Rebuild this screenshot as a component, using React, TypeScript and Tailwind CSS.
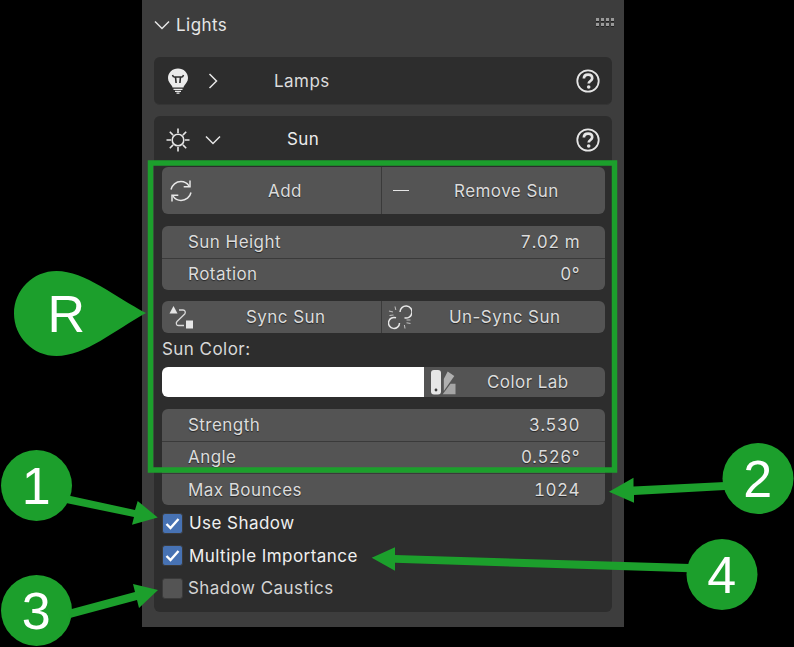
const labelShadow = "[text-shadow:0_1px_1px_rgba(0,0,0,0.55)]";

function Help() {
  return (
    <svg width="24" height="24" viewBox="0 0 24 24" fill="none" className="shrink-0">
      <circle cx="12" cy="12" r="10.7" stroke="#e6e6e6" strokeWidth="1.8" />
      <path d="M7.900 9.600c0-2.400 1.800-3.900 4.200-3.900 2.400 0 4.100 1.400 4.100 3.500 0 2.800-3.500 2.700-3.500 5.400" stroke="#e6e6e6" strokeWidth="2.700" fill="none" />
      <circle cx="12.700" cy="18" r="1.800" fill="#e6e6e6" />
    </svg>
  );
}

function Bulb() {
  return (
    <svg width="22" height="26" viewBox="0 0 22 26" fill="none">
      <path d="M11 0.500C5.300 0.500 1 4.700 1 10c0 3.600 2.200 5.600 3.600 7.400.6.800.8 1.400.9 2.100h11c.1-.7.3-1.300.9-2.100C18.800 15.600 21 13.600 21 10 21 4.700 16.700.500 11 .500z" fill="#ebebeb" />
      <path d="M6.500 9h9M8.500 9l.6 6M13.500 9l-.6 6M6.500 9l-1-2M15.500 9l1-2" stroke="#2d2d2d" strokeWidth="1.600" />
      <path d="M6.500 21.300h9M8 23.300h6M9.500 25.200h3" stroke="#ebebeb" strokeWidth="1.300" />
    </svg>
  );
}

function Sun() {
  return (
    <svg width="24" height="24" viewBox="0 0 24 24" fill="none" stroke="#e6e6e6" strokeWidth="1.600">
      <circle cx="12" cy="12" r="5.800" />
      <path d="M12 0.500v4.500M12 19v4.500M0.500 12h4.500M19 12h4.500M3.800 3.800l3.300 3.300M16.900 16.900l3.300 3.300M20.200 3.800l-3.300 3.300M7.100 16.900l-3.300 3.300" />
    </svg>
  );
}

function Chevron({ open }: { open: boolean }) {
  return (
    <svg width="16" height="16" viewBox="0 0 16 16" fill="none" stroke="#e6e6e6" strokeWidth="1.500">
      {open ? <path d="M1 4.500l7 7 7-7" /> : <path d="M4.500 1l7 7-7 7" />}
    </svg>
  );
}

function Refresh() {
  return (
    <svg width="24" height="24" viewBox="0 0 24 24" fill="none" stroke="#e6e6e6" strokeWidth="1.500">
      <path d="M2 10.500C3 6 7 2.500 12 2.500c3.500 0 6.300 1.800 8 4.300" />
      <path d="M22 13.500c-1 4.500-5 8-10 8-3.500 0-6.300-1.800-8-4.300" />
      <path d="M21 1.500v6.300h-6.300M3 22.500v-6.300h6.300" />
    </svg>
  );
}

function SyncIcon() {
  return (
    <svg width="24" height="26" viewBox="0 0 24 26" fill="none">
      <path d="M0.500 9.500L4.500 2l4 7.500z" fill="#e6e6e6" />
      <path d="M10 6h4c2 0 3 2.300 1.700 4L8 17.500c-1.300 1.500-.7 4 1.300 4H15" stroke="#d9d9d9" strokeWidth="1.300" />
      <rect x="17" y="16.500" width="7" height="8" fill="#e6e6e6" />
    </svg>
  );
}

function UnlinkIcon() {
  return (
    <svg width="24" height="26" viewBox="0 0 24 26" fill="none" stroke="#e6e6e6" strokeWidth="1.500">
      <path d="M12 8a6 6 0 1 1 4.500 5.800" />
      <path d="M11.500 19a5.500 5.500 0 1 1-3.500-5.200" />
      <path d="M7 2.500l.8 3.500M1 7l4 1M1.500 11.500l4-.5M17 24.500l-.6-3.500M22.500 19.500l-4-.8M22.500 16h-4" strokeWidth="1.100" stroke="#bdbdbd" />
    </svg>
  );
}

function SwatchIcon() {
  return (
    <svg width="26" height="26" viewBox="0 0 26 26" fill="none">
      <path d="M16.700 2.500l6.600 4.500-10.500 15V10z" fill="#b0b0b0" />
      <path d="M11.700 25.300L19.500 14.800H24.500v10.500z" fill="#a5a5a5" />
      <rect x="0" y="1" width="10" height="24.500" rx="3" fill="#e6e6e6" />
      <circle cx="5" cy="21" r="1.400" fill="#3d3d3d" />
    </svg>
  );
}

function Grip() {
  return (
    <div className="-mr-[2px] mb-[6px] grid grid-cols-4 gap-x-[2px] gap-y-[2px]">
      {Array.from({ length: 8 }).map((_, i) => (
        <div key={i} className="h-[3px] w-[3px] bg-[#9a9a9a] shadow-[0_1px_0_#222]" />
      ))}
    </div>
  );
}

function Row({ label, value, divider, nudge }: { label: string; value: string; divider?: boolean; nudge?: boolean }) {
  return (
    <div className={`flex h-[32px] items-center justify-between bg-[#545454] pl-[26px] pr-[25px] text-[#dcdcdc] ${labelShadow} ${divider ? "border-t border-[#3a3a3a]" : ""} ${nudge ? "pt-[2px]" : ""}`}>
      <span>{label}</span>
      <span className="tabular-nums">{value}</span>
    </div>
  );
}

function Check({ label, checked }: { label: string; checked: boolean }) {
  return (
    <div className="flex h-[32.500px] items-center">
      <div className={`flex h-[21px] w-[21px] items-center justify-center rounded-[3px] border border-[#3a3a3a] ${checked ? "bg-[#4772b3]" : "bg-[#545454]"}`}>
        {checked && (
          <svg width="15" height="13" viewBox="0 0 15 13" fill="none">
            <path d="M1.500 7l4 4L13.500 2" stroke="#fff" strokeWidth="2.400" />
          </svg>
        )}
      </div>
      <span className={checked ? "ml-[6px] pt-[1px] text-[#f0f0f0]" : "ml-[5px] text-[#d4d4d4]"}>{label}</span>
    </div>
  );
}

function Annotations() {
  const green = "#1c9f2c";
  return (
    <svg width="794" height="647" viewBox="0 0 794 647" className="pointer-events-none absolute left-0 top-0">
      <rect x="150.500" y="163" width="464" height="307" fill="none" stroke={green} strokeWidth="5.500" />
      <path d="M56.500 271C33 271 14 290 14 313.500S33 356 56.500 356C85 356 115 330 146 313 115 297 85 271 56.500 271z" fill={green} />
      <circle cx="36.500" cy="485.500" r="35.500" fill={green} />
      <circle cx="36.500" cy="610.500" r="35.500" fill={green} />
      <circle cx="758" cy="478.500" r="35.500" fill={green} />
      <circle cx="722" cy="574.500" r="35.500" fill={green} />
      <polygon points="66,495 135,510 137.700,501 157.700,517.500 132,524.700 134,517 66,503" fill={green} />
      <polygon points="68,610 135,592 133,584 158,590 139,608 137,600 70,618" fill={green} />
      <polygon points="609,491.700 633.500,477.700 633.500,486.500 725,482 725,490 634,495 634,502.700" fill={green} />
      <polygon points="371.700,557.700 395,547.300 395,555 690,564 690,572.300 395,562.700 395,570.700" fill={green} />
      <g fill="#fff" fontFamily="'Liberation Sans', Arial, sans-serif" fontSize="52" textAnchor="middle">
        <text x="66.500" y="332">R</text>
        <text x="36.500" y="504">1</text>
        <text x="36.500" y="629">3</text>
        <text x="758" y="497">2</text>
        <text x="722" y="593">4</text>
      </g>
    </svg>
  );
}

export default function App() {
  return (
    <div className="relative h-[647px] w-[794px] overflow-hidden bg-black font-['Inter',sans-serif] text-[17px] tracking-[0.45px]">
      <div className="ml-[142px] h-[627px] w-[482px] bg-[#3d3d3d] px-[12px]">
        {/* Lights header */}
        <div className="flex h-[57px] items-center justify-between pb-[7px]">
          <div className="flex items-center gap-[6px] text-[#e6e6e6]">
            <Chevron open />
            <span className="pt-[2px]">Lights</span>
          </div>
          <Grip />
        </div>

        {/* Lamps */}
        <div className="flex h-[48px] items-center rounded-[6px] border-b border-[#353535] bg-[#2d2d2d] pl-[13px] pr-[12px] text-[#dcdcdc]">
          <Bulb />
          <div className="ml-[16px]"><Chevron open={false} /></div>
          <span className="ml-[53px] pt-[2px]">Lamps</span>
          <div className="ml-auto"><Help /></div>
        </div>

        {/* Sun */}
        <div className="mt-[11px] h-[496px] rounded-[6px] bg-[#2d2d2d] pl-[8px] pr-[7px]">
          <div className="flex h-[51px] items-center pb-[4px] pl-[4px] pr-[5px] text-[#ececec]">
            <Sun />
            <div className="ml-[15px]"><Chevron open /></div>
            <span className="ml-[66px]">Sun</span>
            <div className="ml-auto"><Help /></div>
          </div>

          <div className={`flex h-[47px] overflow-hidden rounded-[6px] bg-[#545454] text-[#dcdcdc] ${labelShadow}`}>
            <div className="flex w-[220px] items-center border-r border-[#3a3a3a] pl-[7px]">
              <Refresh />
              <span className="ml-[75px] pt-[2px]">Add</span>
            </div>
            <div className="flex flex-1 items-center pl-[11px]">
              <div className="h-[1.500px] w-[16px] bg-[#e6e6e6]" />
              <span className="ml-[45px] pt-[2px]">Remove Sun</span>
            </div>
          </div>

          <div className="mt-[12px] overflow-hidden rounded-[6px]">
            <Row label="Sun Height" value="7.02 m" nudge />
            <Row label="Rotation" value="0°" divider />
          </div>

          <div className={`mt-[11px] flex h-[32px] overflow-hidden rounded-[6px] bg-[#545454] text-[#dcdcdc] ${labelShadow}`}>
            <div className="flex w-[220px] items-center border-r border-[#3a3a3a] pl-[7px]">
              <SyncIcon />
              <span className="ml-[53px] pt-[2px]">Sync Sun</span>
            </div>
            <div className="flex flex-1 items-center pl-[6px]">
              <UnlinkIcon />
              <span className="ml-[37px] pt-[2px]">Un-Sync Sun</span>
            </div>
          </div>

          <div className="flex h-[34px] items-center text-[#d8d8d8]">Sun Color:</div>

          <div className="flex h-[30px] overflow-hidden rounded-[6px]">
            <div className="w-[262px] bg-white" />
            <div className={`flex flex-1 items-center bg-[#545454] pl-[7px] text-[#dcdcdc] ${labelShadow}`}>
              <SwatchIcon />
              <span className="ml-[30px] pt-[2px]">Color Lab</span>
            </div>
          </div>

          <div className="mt-[12px] overflow-hidden rounded-[6px]">
            <Row label="Strength" value="3.530" nudge />
            <Row label="Angle" value="0.526°" divider />
            <Row label="Max Bounces" value="1024" divider nudge />
          </div>

          <div className="mt-[2px]">
            <Check label="Use Shadow" checked />
            <Check label="Multiple Importance" checked />
            <Check label="Shadow Caustics" checked={false} />
          </div>
        </div>
      </div>
      <Annotations />
    </div>
  );
}
